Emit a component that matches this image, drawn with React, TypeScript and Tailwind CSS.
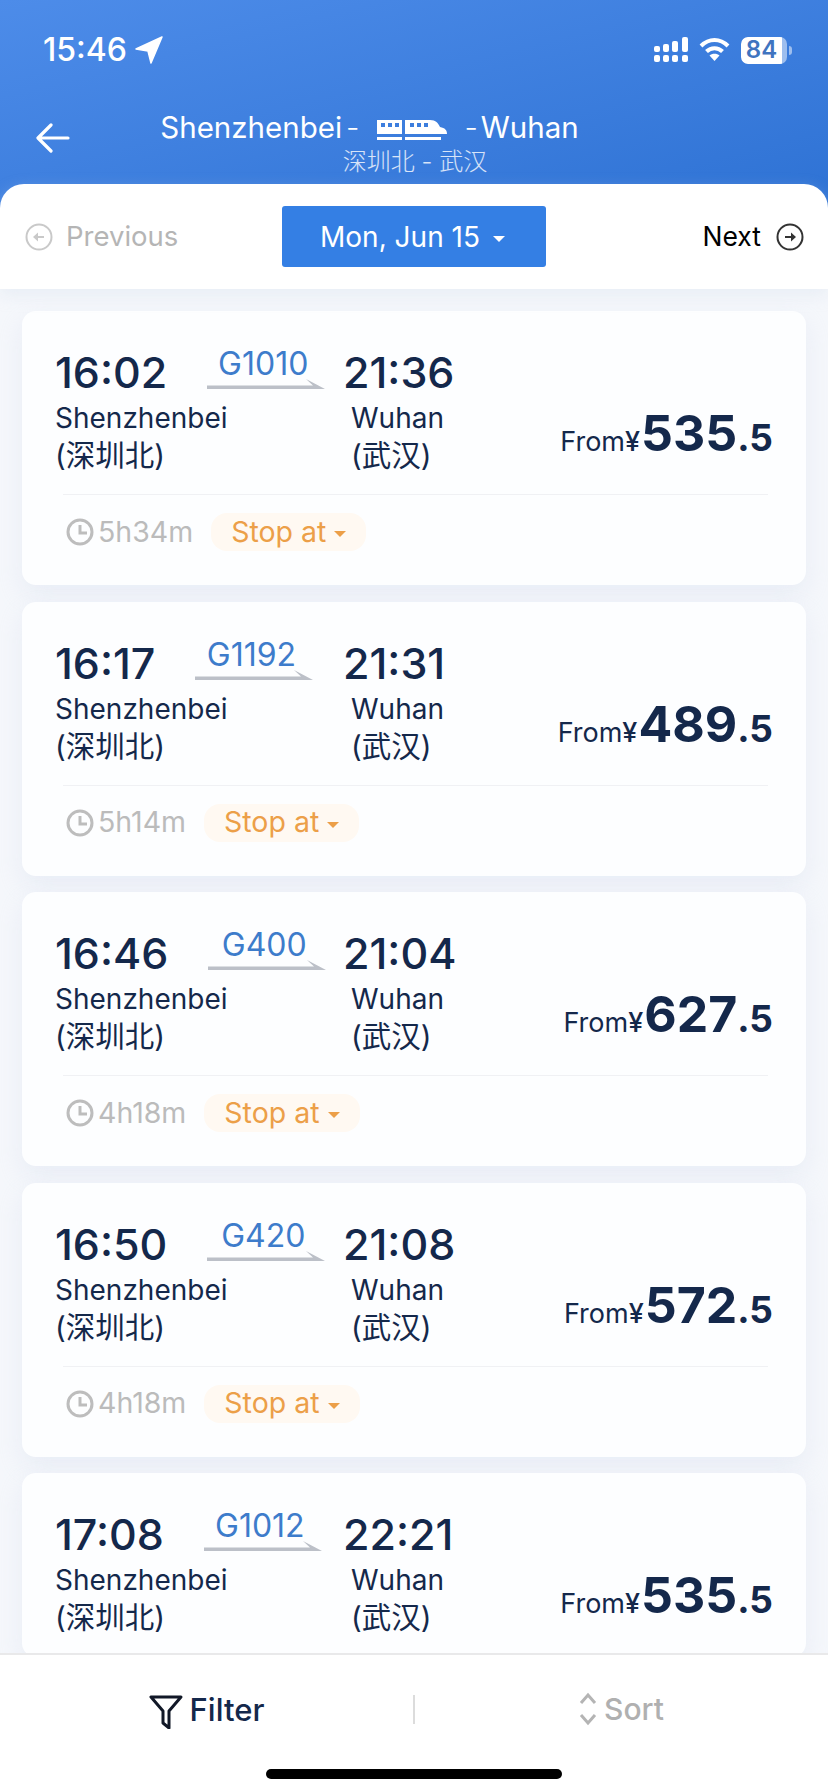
const trains = [
  { dep: "16:02", no: "G1010", arr: "21:36", price: "535", dur: "5h34m" },
  { dep: "16:17", no: "G1192", arr: "21:31", price: "489", dur: "5h14m" },
  { dep: "16:46", no: "G400", arr: "21:04", price: "627", dur: "4h18m" },
  { dep: "16:50", no: "G420", arr: "21:08", price: "572", dur: "4h18m" },
  { dep: "17:08", no: "G1012", arr: "22:21", price: "535", dur: "" },
];

function StatusBar() {
  return (
    <div className="flex h-[100px] items-center justify-between pl-[43px] pr-[36px] text-white">
      <div className="flex items-center gap-[8px]">
        <span className="text-[32px] leading-none font-medium">15:46</span>
        <svg width="28" height="28" viewBox="0 0 28 28" fill="white">
          <path d="M27 1 L1 13 L13 15 L16 27 Z" strokeLinejoin="round" stroke="white" strokeWidth="1.5" />
        </svg>
      </div>
      <div className="flex items-center gap-[11px]">
        <svg width="34" height="26" viewBox="0 0 34 26" fill="white">
          <rect x="0" y="9" width="6" height="6" rx="2" />
          <rect x="9" y="7" width="6" height="8" rx="2" />
          <rect x="18" y="4" width="6" height="11" rx="2" />
          <rect x="28" y="0" width="6" height="15" rx="2" />
          <rect x="0" y="18" width="6" height="7" rx="2" />
          <rect x="9" y="18" width="6" height="7" rx="2" />
          <rect x="18" y="18" width="6" height="7" rx="2" />
          <rect x="28" y="18" width="6" height="7" rx="2" />
        </svg>
        <svg width="31" height="24" viewBox="0 0 31 24" fill="none" stroke="white" strokeWidth="4">
          <path d="M2 8 C10 0 21 0 29 8" />
          <path d="M7.5 13.5 C12 9 19 9 23.5 13.5" />
          <path d="M15.5 23 L10.5 17.5 C13 15 18 15 20.5 17.5 Z" fill="white" stroke="none" />
        </svg>
        <div className="flex items-center">
          <div className="flex h-[27px] w-[46px] overflow-hidden rounded-[7px] bg-white/50">
            <div className="flex h-full w-[41px] items-center justify-center rounded-l-[7px] bg-white text-[24px] leading-none font-semibold text-[#3f74c0]">
              84
            </div>
          </div>
          <div className="ml-[2px] h-[9px] w-[3px] rounded-r-full bg-white/50" />
        </div>
      </div>
    </div>
  );
}

function TrainIcon() {
  return (
    <svg width="72" height="24" viewBox="0 0 72 24" fill="white">
      <path d="M1 2 H26 V16 H1 Z M5 5 V9 H9 V5 Z M12 5 V9 H16 V5 Z M19 5 V9 H23 V5 Z" fillRule="evenodd" />
      <rect x="1" y="19" width="25" height="3" />
      <path d="M29 16 V2 H54 C60 2 62 5 64 9 C69 10 71 12 71 16 Z M34 5 V9 H38 V5 Z M41 5 V9 H45 V5 Z M48 5 V9 H52 V5 Z" fillRule="evenodd" />
      <rect x="29" y="19" width="36" height="3" />
    </svg>
  );
}

function Header() {
  return (
    <div className="h-[208px] bg-gradient-to-br from-[#4d8ce9] to-[#2e72d4]">
      <StatusBar />
      <div className="relative flex flex-col items-center pt-[10px]">
        <svg className="absolute left-[36px] top-[23px]" width="34" height="30" viewBox="0 0 34 30" fill="none" stroke="white" strokeWidth="3.2" strokeLinecap="round" strokeLinejoin="round">
          <path d="M32 15 H3 M15 2 L2 15 L15 28" />
        </svg>
        <div className="flex h-[36px] items-center pr-[89px] text-[29.5px] leading-none text-white">
          <span>Shenzhenbei</span>
          <span className="ml-[4px] font-light">-</span>
          <span className="ml-[17px] mr-[16px] mt-[4px]"><TrainIcon /></span>
          <span className="font-light">-</span>
          <span className="ml-[3px]">Wuhan</span>
        </div>
        <div className="mt-[1px] pl-[2px] text-[24px] leading-[30px] font-light text-white/80">深圳北 - 武汉</div>
      </div>
    </div>
  );
}

function CircleArrow({ dir, color }: { dir: "left" | "right"; color: string }) {
  return (
    <svg width="28" height="28" viewBox="0 0 28 28" fill="none">
      <circle cx="14" cy="14" r="12.5" stroke={color} strokeWidth="2" />
      <path d={dir === "left" ? "M19 14 H11" : "M9 14 H17"} stroke={color} strokeWidth="2" />
      <path d={dir === "left" ? "M13 9.5 L8 14 L13 18.5 Z" : "M15 9.5 L20 14 L15 18.5 Z"} fill={color} />
    </svg>
  );
}

function DateNav() {
  return (
    <div className="relative z-10 -mt-[24px] flex h-[105px] items-center justify-between rounded-t-[24px] bg-white pl-[25px] pr-[24px] shadow-[0_6px_16px_rgba(210,220,235,0.35)]">
      <div className="flex w-[256px] items-center gap-[13px] text-[27.5px] text-[#b5b5b5]">
        <CircleArrow dir="left" color="#c9c9c9" />
        <span>Previous</span>
      </div>
      <div className="flex h-[61px] w-[264px] items-center justify-center gap-[13px] rounded-[3px] bg-[#347fe4] pr-[2px] text-[28px] text-white">
        <span>Mon, Jun 15</span>
        <span className="mt-[5px] h-0 w-0 border-x-[6px] border-t-[6px] border-x-transparent border-t-white" />
      </div>
      <div className="flex w-[258px] items-center justify-end gap-[15px] text-[26.5px] text-black">
        <span>Next</span>
        <CircleArrow dir="right" color="#333333" />
      </div>
    </div>
  );
}

function TrainCard({ t }: { t: (typeof trains)[number] }) {
  return (
    <div className="shrink-0 rounded-[14px] bg-[#fdfeff] shadow-[0_10px_24px_rgba(205,215,235,0.3)]">
      <div className="flex items-end justify-between pl-[33px] pr-[33px] pt-[39px]">
        <div className="text-[#14284b]">
          <div className="flex h-[44px] w-[500px] items-center">
            <div className="flex w-[288px] items-center">
              <span className="text-[43px] leading-[44px] font-medium">{t.dep}</span>
              <div className="ml-[40px] flex w-[118px] flex-col items-center">
                <span className="-mt-[8px] pr-[6px] text-[32px] leading-[34px] text-[#3d7ccb]">{t.no}</span>
                <svg className="-mt-[2px]" width="118" height="10" viewBox="0 0 118 10">
                  <path d="M0 6.5 H106 L99 0 L118 10 H0 Z" fill="#bcc0c8" />
                </svg>
              </div>
            </div>
            <span className="text-[43px] leading-[44px] font-medium">{t.arr}</span>
          </div>
          <div className="mt-[6px] flex text-[28px] leading-[37px]">
            <div className="w-[296px]">
              <div>Shenzhenbei</div>
              <div className="text-[29.5px]">(深圳北)</div>
            </div>
            <div>
              <div>Wuhan</div>
              <div className="text-[29.5px]">(武汉)</div>
            </div>
          </div>
        </div>
        <div className="mb-[16px] flex items-baseline whitespace-nowrap text-[#14284b]">
          <span className="text-[27px] leading-none">From</span>
          <span className="mr-[1px] text-[27px] leading-none font-medium">¥</span>
          <span className="text-[50px] leading-none font-bold">{t.price}</span>
          <span className="text-[37px] leading-none font-bold">.5</span>
        </div>
      </div>
      {t.dur ? (
        <>
          <div className="ml-[41px] mr-[38px] mt-[20px] h-px bg-[#f0f1f4]" />
          <div className="flex items-center pb-[34px] pl-[44px] pt-[18px]">
            <svg width="28" height="28" viewBox="0 0 28 28" fill="none" stroke="#bdbdbd" strokeWidth="3">
              <circle cx="14" cy="14" r="12" />
              <path d="M14 7 V15 H21" />
            </svg>
            <span className="ml-[4px] text-[28.5px] leading-none text-[#bbbbbb]">{t.dur}</span>
            <div className="ml-[18px] flex h-[38px] items-center gap-[8px] rounded-[16px] bg-[#fff9f2] px-[20px] text-[28.5px] text-[#ec9f48]">
              <span>Stop at</span>
              <span className="mt-[4px] h-0 w-0 border-x-[6px] border-t-[6px] border-x-transparent border-t-[#ec9f48]" />
            </div>
          </div>
        </>
      ) : (
        <div className="h-[21px]" />
      )}
    </div>
  );
}

function BottomBar() {
  return (
    <div className="relative z-10 h-[139px] shrink-0 border-t-2 border-[#e9e9ea] bg-white">
      <div className="mb-[6px] flex h-[108px] items-center">
        <div className="flex w-[413px] items-center justify-center gap-[7px] text-[#14284b]">
          <svg className="mt-[5px]" width="34" height="34" viewBox="0 0 34 34" fill="none" stroke="#111827" strokeWidth="3">
            <path d="M2 2 H32 L20 16 V33 L14 28 V16 Z" strokeLinejoin="round" />
          </svg>
          <span className="text-[31px] leading-none font-medium">Filter</span>
        </div>
        <div className="h-[29px] w-[2px] bg-[#dcdcdc]" />
        <div className="flex flex-1 items-center justify-center gap-[7px] text-[#b0b0b0]">
          <svg width="18" height="34" viewBox="0 0 18 34" fill="none" stroke="#b4b4b4" strokeWidth="3">
            <path d="M2 11 L9 3 L16 11" />
            <path d="M2 23 L9 31 L16 23" />
          </svg>
          <span className="text-[30px] leading-none font-medium">Sort</span>
        </div>
      </div>
      <div className="mx-auto h-[10px] w-[296px] rounded-full bg-black" />
    </div>
  );
}

export default function App() {
  return (
    <div className="flex h-[1792px] w-[828px] flex-col overflow-hidden bg-[#f5f7fb] [font-family:Inter,'Noto_Sans_CJK_SC',sans-serif]">
      <Header />
      <DateNav />
      <div className="flex min-h-0 flex-1 flex-col gap-[16.5px] overflow-hidden px-[22px] pt-[22px]">
        {trains.map((t) => (
          <TrainCard key={t.dep} t={t} />
        ))}
      </div>
      <BottomBar />
    </div>
  );
}
